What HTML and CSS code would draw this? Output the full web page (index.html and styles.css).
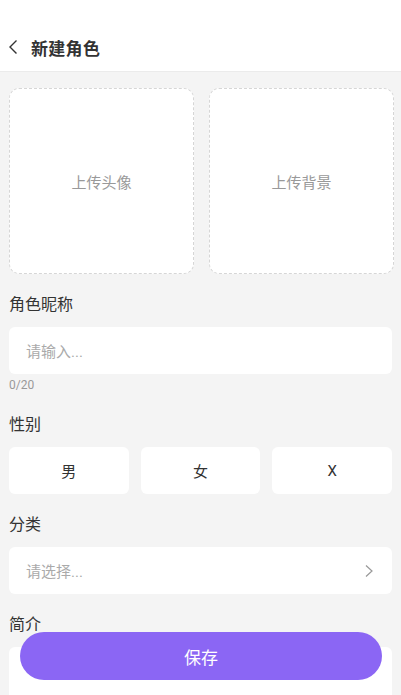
FILE: index.html
```html
<!DOCTYPE html>
<html lang="zh">
<head>
<meta charset="utf-8">
<title>新建角色</title>
<link rel="stylesheet" href="styles.css">
</head>
<body>
<header class="header">
  <div class="bar">
    <svg class="back" width="12" height="16" viewBox="0 0 12 16"><path d="M9.5 1.5 L3 8 L9.5 14.5" fill="none" stroke="#333" stroke-width="1.4"/></svg>
    <h1 class="title">新建角色</h1>
  </div>
</header>
<main class="main">
  <div class="uploads">
    <div class="upload">上传头像</div>
    <div class="upload">上传背景</div>
  </div>
  <div class="label first">角色昵称</div>
  <div class="field"><span class="ph">请输入...</span></div>
  <div class="count">0/20</div>
  <div class="label">性别</div>
  <div class="genders">
    <div class="gender">男</div>
    <div class="gender">女</div>
    <div class="gender">X</div>
  </div>
  <div class="label">分类</div>
  <div class="field select"><span class="ph">请选择...</span>
    <svg width="10" height="14" viewBox="0 0 10 14"><path d="M2 1.5 L8 7 L2 12.5" fill="none" stroke="#999" stroke-width="1.2"/></svg>
  </div>
  <div class="label">简介</div>
  <div class="textarea"></div>
</main>
<button class="save">保存</button>
</body>
</html>
```
FILE: styles.css
```css
* { box-sizing: border-box; }
html, body { margin: 0; padding: 0; }
body {
  background: #f4f4f4;
  font-family: Roboto, "Noto Sans CJK SC", sans-serif;
  color: #333;
  width: 401px;
  height: 695px;
  overflow: hidden;
}
.header {
  background: #fff;
  height: 72px;
  border-bottom: 1px solid #ebebeb;
  padding-top: 24px;
}
.bar {
  height: 47px;
  display: flex;
  align-items: center;
  padding-left: 7px;
}
.back { margin-right: 12px; margin-top: -2px; }
.title {
  margin: 0;
  font-size: 17px;
  font-weight: 700;
  color: #333;
  letter-spacing: 0.3px;
}
.main { padding: 16px 9px 0 9px; }
.uploads {
  display: grid;
  grid-template-columns: 185px 185px;
  gap: 15px;
}
.upload {
  height: 186px;
  background: #fff;
  border: 1px dashed #d6d6d6;
  border-radius: 10px;
  display: flex;
  align-items: center;
  justify-content: center;
  font-size: 15px;
  color: #999;
}
.label {
  font-size: 16px;
  line-height: 22px;
  margin-top: 20px;
  margin-bottom: 11px;
  color: #333;
}
.label.first { margin-top: 20px; }
.field {
  width: 383px;
  height: 47px;
  background: #fff;
  border-radius: 6px;
  display: flex;
  align-items: center;
  padding: 0 17px;
}
.ph { font-size: 15px; color: #aaa; }
.select { justify-content: space-between; padding-right: 18px; }
.count {
  font-size: 12px;
  line-height: 16px;
  margin-top: 3px;
  color: #999;
}
.count + .label { margin-top: 21px; }
.genders {
  width: 383px;
  display: grid;
  grid-template-columns: repeat(3, 1fr);
  gap: 12px;
}
.gender {
  height: 47px;
  background: #fff;
  border-radius: 6px;
  display: flex;
  align-items: center;
  justify-content: center;
  font-size: 15px;
  color: #333;
}
.textarea {
  width: 383px;
  height: 48px;
  background: #fff;
  border-radius: 6px 6px 0 0;
}
.save {
  position: fixed;
  left: 20px;
  right: 19px;
  bottom: 15px;
  height: 48px;
  border: none;
  border-radius: 24px;
  background: #8b66f4;
  color: #fff;
  font-family: Roboto, "Noto Sans CJK SC", sans-serif;
  font-size: 17px;
  padding: 0;
}
```
